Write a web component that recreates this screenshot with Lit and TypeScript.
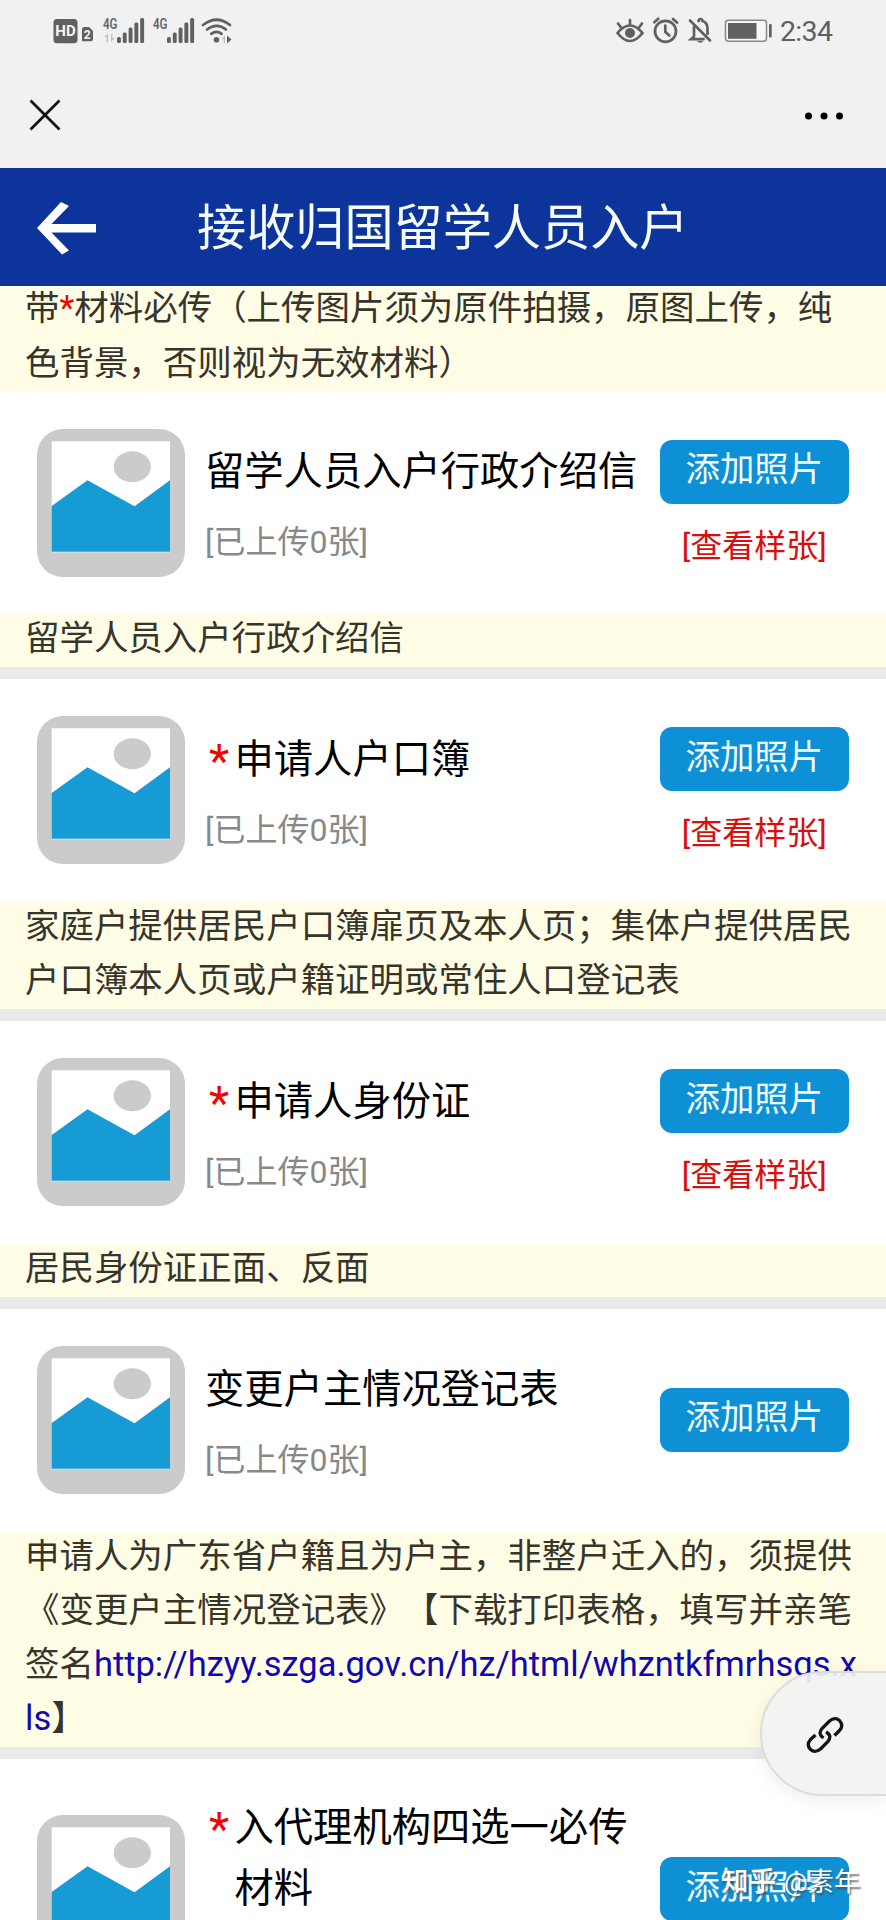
import { LitElement, html, css, svg, nothing } from "lit";
import { customElement, property } from "lit/decorators.js";

const FONT = css`Roboto, "Noto Sans CJK SC", sans-serif`;

@customElement("status-bar")
class StatusBar extends LitElement {
  static styles = css`
    :host { display: block; height: 60px; }
    .icons { display: block; width: 886px; height: 60px; }
    .t { font-family: ${FONT}; fill: #5f5f5f; }
    .cond { font-family: Roboto, sans-serif; font-weight: 600; fill: #666; }
    .hd { font-family: Roboto, sans-serif; font-weight: 700; }
  `;

  private bars(x: number) {
    return [6, 10.5, 15.5, 20.5, 25].map(
      (h, i) => svg`<rect x=${x + i * 5.8} y=${43 - h} width="3.9" height=${h} rx="1.5"></rect>`
    );
  }

  render() {
    return html`<svg class="icons" viewBox="0 0 886 60" fill="#606060">
      <rect x="53.5" y="19" width="24" height="24.3" rx="3.5"></rect>
      <text class="hd" x="55.3" y="36.4" font-size="14.5" textLength="20.4" lengthAdjust="spacingAndGlyphs" fill="#f5f5f5">HD</text>
      <path d="M82 29.500Q82 27 84.500 27H89L93 31V38.700Q93 41.200 90.500 41.200H82Z"></path>
      <text class="hd" x="83.8" y="39" font-size="12" fill="#f5f5f5">2</text>
      <text class="cond" x="103" y="29" font-size="15.500" textLength="14.500" lengthAdjust="spacingAndGlyphs">4G</text>
      <path d="M104 37l4-3.500v9h-1.500v-5.500h-2.500zM115 38l-4 4v-8h1.500v4z" fill="#c4c4c4"></path>
      ${this.bars(117)}
      <text class="cond" x="153" y="29" font-size="15.500" textLength="14.500" lengthAdjust="spacingAndGlyphs">4G</text>
      ${this.bars(167)}
      <g fill="none" stroke="#606060" stroke-width="2.700" stroke-linecap="round">
        <path d="M203 25Q216.500 14.500 230 25"></path>
        <path d="M207 29.500Q216.500 22.300 226 29.500"></path>
        <path d="M211.300 33.800Q216.500 30 221.700 33.800"></path>
      </g>
      <circle cx="216.500" cy="39.700" r="2.800"></circle>
      <path d="M221.500 39l3.500-3.500v7.500h-1.300v-4z" fill="#bbb"></path>
      <path d="M227 35.500l4.500 4-4.500 4z"></path>

      <g fill="none" stroke="#606060" stroke-width="2.700" stroke-linecap="round">
        <path d="M617.500 33Q630 49 642.500 33Q630 18 617.500 33Z"></path>
        <path d="M630 20v4M618 23.500l3 4M642 23.500l-3 4"></path>
        <circle cx="665.500" cy="31.300" r="10.500"></circle>
        <path d="M665.300 25.500v6.300l4 3.700M654.300 22.300l4-3.500M673 19l4 3.500"></path>
        <path d="M690 20.500l20 20"></path>
        <path d="M694 27v9.500l-3 2.700h12.500M707.500 34v-5.500q0-6-5-7.500q-0.300-2-2-2t-2 2.200"></path>
      </g>
      <path d="M697 41h6.500q-3.200 3.500-6.500 0z"></path>
      <circle cx="630" cy="33" r="5"></circle>
      <rect x="725.500" y="20.300" width="41" height="21" rx="3" fill="#f6f6f6" stroke="#888" stroke-width="1.500"></rect>
      <rect x="728" y="23" width="28.500" height="15.800"></rect>
      <rect x="769" y="24" width="2.700" height="13.500" rx="1"></rect>
      <text class="t" x="780" y="41" font-size="28.500" textLength="53">2:34</text>
    </svg>`;
  }
}

@customElement("photo-thumb")
class PhotoThumb extends LitElement {
  static styles = css`
    :host { display: block; width: 148px; height: 148px; }
    .pic { display: block; }
  `;
  render() {
    return html`<svg class="pic" width="148" height="148" viewBox="0 0 148 148">
      <rect width="148" height="148" rx="26" fill="#cbcbcb"></rect>
      <rect x="14.700" y="12.300" width="118.300" height="111" fill="#fff"></rect>
      <ellipse cx="95.300" cy="37.800" rx="18.600" ry="15.500" fill="#cbcbcb"></ellipse>
      <path d="M14.700 77L50.500 51.300L97.500 77.300L133 51.300V122.700H14.700Z" fill="#169bd5"></path>
    </svg>`;
  }
}

interface Material {
  title: string[];
  required?: boolean;
  sample?: boolean;
  note?: unknown;
}

@customElement("material-item")
class MaterialItem extends LitElement {
  @property({ attribute: false }) item!: Material;

  static styles = css`
    :host { display: block; font-family: ${FONT}; }
    .row {
      display: flex; align-items: center; box-sizing: border-box;
      min-height: 221.500px; padding: 36.500px 37px; background: #fff;
    }
    .info { flex: 1; padding-left: 20px; white-space: nowrap; }
    .title { display: flex; font-size: 39.300px; line-height: 61px; color: #000; padding-top: 2.500px; }
    .star { width: 29.500px; box-sizing: border-box; padding-left: 4px; font-size: 47px; line-height: 61px; height: 61px; color: #f00505; }
    .count { margin-top: 15px; height: 46.900px; font-size: 32px; line-height: 48px; color: #888; }
    .side { width: 189.300px; display: flex; flex-direction: column; align-items: center; }
    .add {
      width: 100%; height: 64px; border: 0; border-radius: 12px; padding: 0 0 5px;
      background: #0d90d6; color: #f2ffff; font-family: inherit; font-size: 34.400px; line-height: 58px;
    }
    .sample { margin-top: 18px; height: 44px; line-height: 48px; font-size: 32px; color: #d70f0f; }
    .note {
      background: #fffde6; color: #37342a; padding: 0 0 0 25px; border-bottom: 12.300px solid #eaeaea;
      text-spacing-trim: space-all;
    }
    .text { font-size: 34.460px; line-height: 54.200px; white-space: nowrap; margin-top: -2px; padding-bottom: 2px; }
    .note { display: flow-root; }
    .url { color: #1108b0; text-decoration: none; }
  `;

  render() {
    const { title, required, sample, note } = this.item;
    return html`
      <div class="row">
        <photo-thumb></photo-thumb>
        <div class="info">
          <div class="title">
            ${required ? html`<span class="star">*</span>` : nothing}
            <div>${title.map((line) => html`<div>${line}</div>`)}</div>
          </div>
          <div class="count">[已上传0张]</div>
        </div>
        <div class="side">
          <button class="add">添加照片</button>
          ${sample ? html`<span class="sample">[查看样张]</span>` : nothing}
        </div>
      </div>
      ${note ? html`<div class="note"><div class="text">${note}</div></div>` : nothing}
    `;
  }
}

const MATERIALS: Material[] = [
  { title: ["留学人员入户行政介绍信"], sample: true, note: "留学人员入户行政介绍信" },
  {
    title: ["申请人户口簿"], required: true, sample: true,
    note: html`家庭户提供居民户口簿扉页及本人页；集体户提供居民<br>户口簿本人页或户籍证明或常住人口登记表`,
  },
  { title: ["申请人身份证"], required: true, sample: true, note: "居民身份证正面、反面" },
  {
    title: ["变更户主情况登记表"],
    note: html`申请人为广东省户籍且为户主，非整户迁入的，须提供<br>《变更户主情况登记表》【下载打印表格，填写并亲笔<br>签名<a class="url">http://hzyy.szga.gov.cn/hz/html/whzntkfmrhsqs.x<br>ls</a>】`,
  },
  { title: ["入代理机构四选一必传", "材料"], required: true },
];

@customElement("app-root")
class AppRoot extends LitElement {
  static styles = css`
    :host {
      display: block; position: relative; width: 886px; height: 1920px; overflow: hidden;
      background: #fff; font-family: ${FONT};
    }
    .top { background: #f1f1f1; height: 168px; }
    .nav { display: flex; justify-content: space-between; align-items: center; height: 108px; padding: 2px 43px 0 29px; box-sizing: border-box; }
    .dots { margin-top: 2px; }
    .header { display: flex; align-items: center; height: 118.400px; background: #0d349a; color: #f5fcff; }
    .back { margin-left: 36px; margin-top: 1px; }
    .heading { margin: 1px 0 0 100px; font-size: 49.150px; font-weight: 400; line-height: 118px; white-space: nowrap; }
    .tip {
      height: 105.400px; background: #fffde6; color: #37342a; font-size: 34.460px; line-height: 54.200px;
      padding: 0 0 2px 25px; box-sizing: border-box; white-space: nowrap; display: flex; align-items: flex-end;
      text-spacing-trim: space-all;
    }
    .red { color: #f00505; }
    .float {
      position: absolute; right: -2px; top: 1670.500px; width: 128px; height: 125px; box-sizing: border-box;
      border: 2px solid #dcdcda; border-radius: 63px 0 0 63px; background: rgba(242, 242, 242, 0.93);
      box-shadow: 0 4px 20px rgba(0, 0, 0, 0.07); display: flex; align-items: center; padding: 3px 0 0 44px;
    }
    .mark {
      position: absolute; left: 721px; top: 1862px; line-height: 40px; font-size: 26.300px; color: #fff;
      text-shadow: 1.500px 1.500px 2px rgba(70, 70, 70, 0.75); white-space: nowrap; display: flex;
    }
    .brand { font-weight: 500; font-size: 27.500px; margin-right: 8px; }
  `;

  render() {
    return html`
      <div class="top">
        <status-bar></status-bar>
        <div class="nav">
          <svg width="32" height="32" viewBox="0 0 32 32" stroke="#111" stroke-width="2.700"><path d="M1.500 1.500L30.500 30.500M30.500 1.500L1.500 30.500"></path></svg>
          <svg class="dots" width="38" height="8" viewBox="0 0 38 8"><circle cx="3.500" cy="4" r="3.500"></circle><circle cx="19" cy="4" r="3.500"></circle><circle cx="34.500" cy="4" r="3.500"></circle></svg>
        </div>
      </div>
      <div class="header">
        <svg class="back" width="61" height="54" viewBox="0 0 61 54" fill="#fff"><path d="M25 1L33 5L15.500 23H60V31.500H15.500L33 49.500L26 53.500L1 27Z"></path></svg>
        <h1 class="heading">接收归国留学人员入户</h1>
      </div>
      <div class="tip"><div>带<span class="red">*</span>材料必传（上传图片须为原件拍摄，原图上传，纯<br>色背景，否则视为无效材料）</div></div>
      ${MATERIALS.map((m) => html`<material-item .item=${m}></material-item>`)}
      <div class="float">
        <svg width="38" height="38" viewBox="0 0 38 38" fill="none" stroke="#151515" stroke-width="3.300">
          <path d="M17.500 22Q11.500 18 16 12.500L23.500 5Q29 0.500 33.500 4.500Q38 9.500 33.500 14.500L28.500 19.500"></path>
          <path d="M20 16Q26.500 19.500 22 25.500L14.500 33Q9 37.500 4.500 33.500Q0 28.500 4.500 23.500L9.500 19"></path>
        </svg>
      </div>
      <div class="mark"><span class="brand">知乎</span><span>@素年</span></div>
    `;
  }
}
